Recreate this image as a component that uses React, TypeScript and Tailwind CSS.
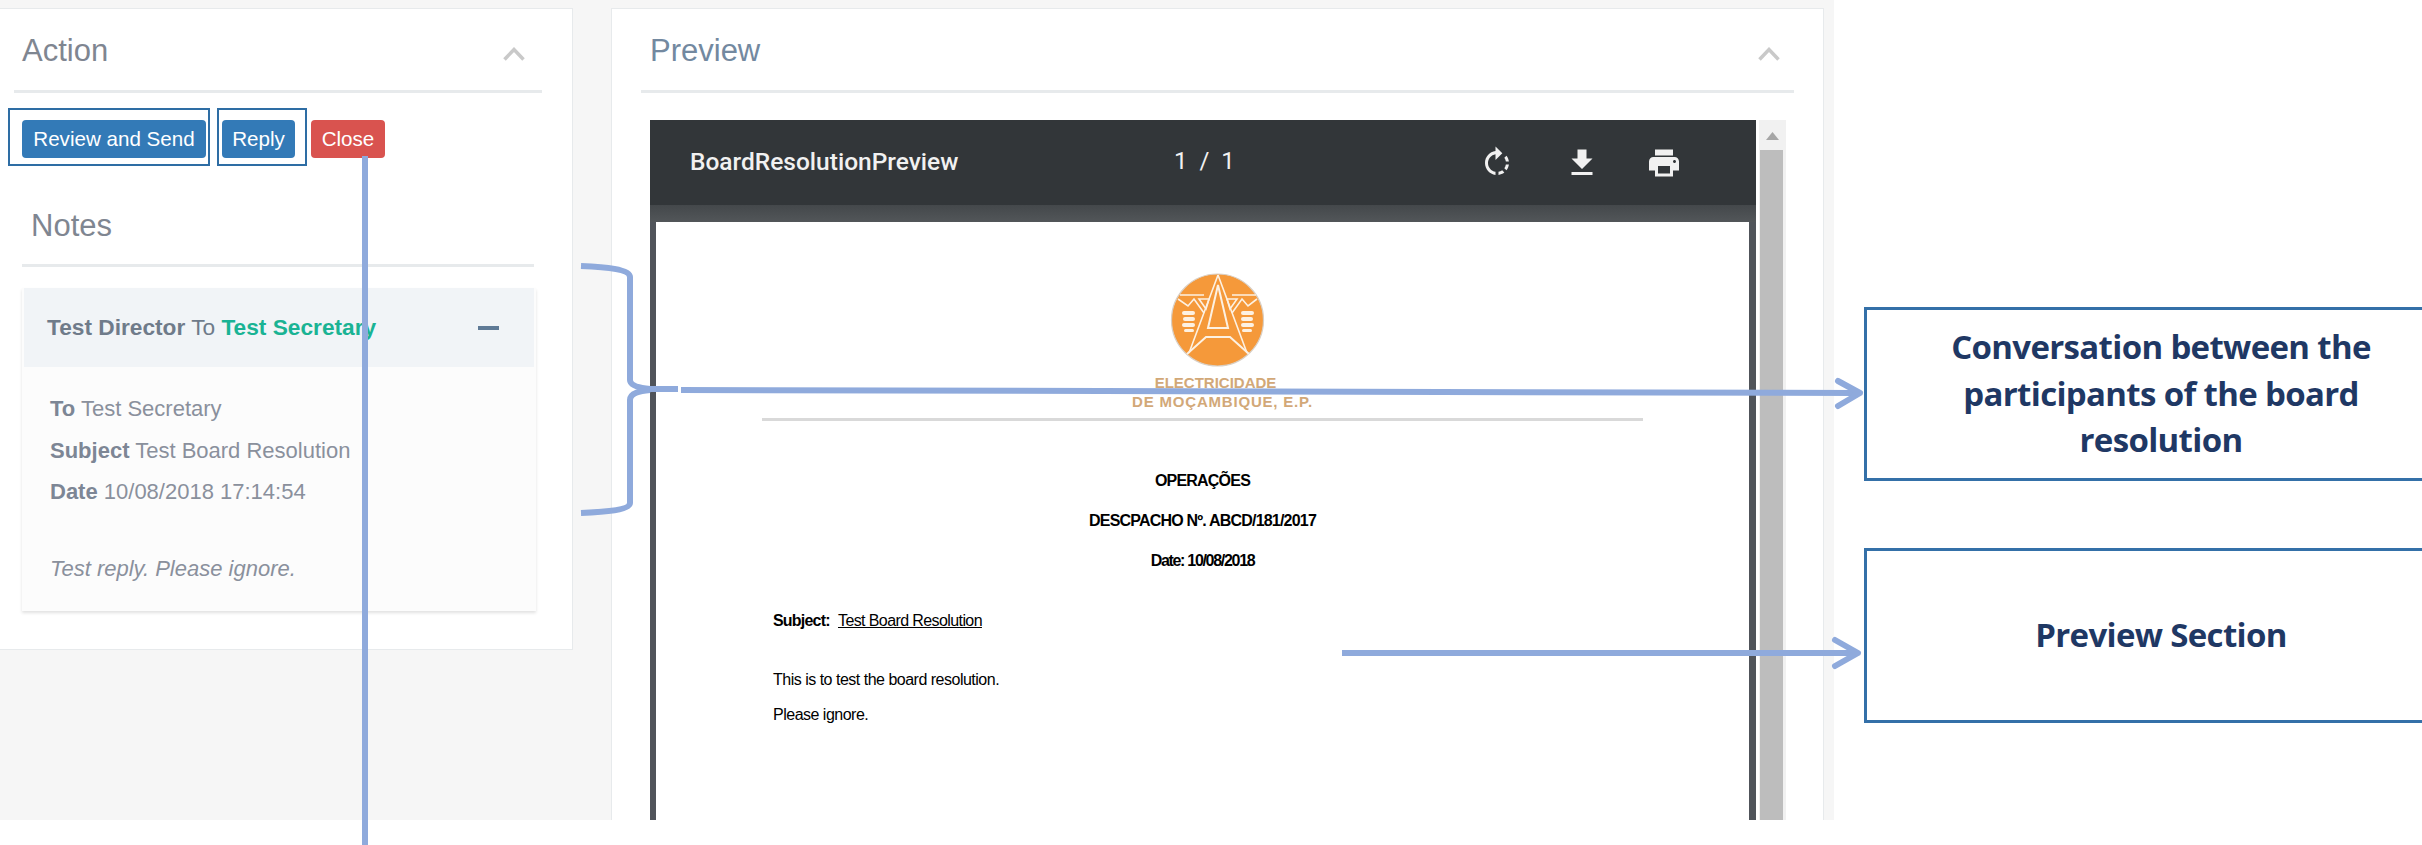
const chevron = (
  <svg className="mt-[4px]" width="22" height="14" viewBox="0 0 22 14" fill="none" stroke="#c9c9c9" strokeWidth="3.5">
    <path d="M1.5 12.5 L11 2.5 L20.5 12.5" />
  </svg>
);

function Logo() {
  return (
    <svg width="110" height="110" viewBox="0 0 110 110" fill="none" stroke="#fdf1e2" strokeWidth="1.6">
      <circle cx="56.5" cy="55" r="46" fill="#f5993a" stroke="#d9cfc4" strokeWidth="1.2" />
      <path d="M57 10 L28 88 M57 10 L86 88" />
      <path d="M19 30 H43 M71 30 H95" />
      <path d="M57 20 L47 63 H67 Z" strokeWidth="2" />
      <path d="M26 89 L45 72 H69 L88 89" strokeWidth="2" />
      <path d="M17 34 L27 41 L33 34 L43 48 M96 34 L87 41 L81 34 L71 48" />
      <path d="M38 34 H48 L45 44 Z M76 34 H66 L69 44 Z" />
      <g fill="#fdf1e2" stroke="none">
        <rect x="21" y="46" width="13" height="4" rx="2" />
        <rect x="22" y="52" width="12" height="4" rx="2" />
        <rect x="21" y="58" width="13" height="4" rx="2" />
        <rect x="23" y="64" width="10" height="3" rx="1.5" />
        <rect x="80" y="46" width="13" height="4" rx="2" />
        <rect x="80" y="52" width="12" height="4" rx="2" />
        <rect x="80" y="58" width="13" height="4" rx="2" />
        <rect x="81" y="64" width="10" height="3" rx="1.5" />
      </g>
    </svg>
  );
}

function PdfViewer() {
  return (
    <div className="flex mt-[27px] ml-[9px] h-[700px] overflow-hidden">
      <div className="w-[1106px] bg-[#50545a] flex flex-col">
        <div className="h-[85px] shrink-0 bg-[#323639] flex items-center text-[#f1f1f1]">
          <span className="ml-[40px] w-[484px] text-[24.5px] font-medium [font-family:Roboto,sans-serif]">
            BoardResolutionPreview
          </span>
          <span className="w-[60px] pb-[4px] text-[24px] tracking-[1.5px] [word-spacing:3px] [font-family:Roboto,sans-serif] whitespace-pre">1 / 1</span>
          <svg className="ml-[245px]" width="36" height="36" viewBox="0 0 24 24" fill="#f1f1f1">
            <path d="M15.55 5.55L11 1v3.07C7.06 4.56 4 7.92 4 12s3.05 7.44 7 7.93v-2.02c-2.84-.48-5-2.94-5-5.91s2.16-5.43 5-5.91V10l4.55-4.45zM19.93 11c-.17-1.39-.72-2.73-1.62-3.89l-1.42 1.42c.54.75.88 1.6 1.02 2.47h2.02zM13 17.9v2.02c1.39-.17 2.74-.71 3.9-1.61l-1.44-1.44c-.75.54-1.59.89-2.46 1.03zm3.89-2.42l1.42 1.41c.9-1.16 1.45-2.5 1.62-3.89h-2.02c-.14.87-.48 1.72-1.02 2.48z" />
          </svg>
          <svg className="ml-[49px]" width="36" height="36" viewBox="0 0 24 24" fill="#f1f1f1">
            <path d="M19 9h-4V3H9v6H5l7 7 7-7zM5 18v2h14v-2H5z" />
          </svg>
          <svg className="ml-[46px]" width="36" height="36" viewBox="0 0 24 24" fill="#f1f1f1">
            <path d="M19 8H5c-1.66 0-3 1.34-3 3v6h4v4h12v-4h4v-6c0-1.66-1.34-3-3-3zm-3 11H8v-5h8v5zm3-7c-.55 0-1-.45-1-1s.45-1 1-1 1 .45 1 1-.45 1-1 1zm-1-9H6v4h12V3z" />
          </svg>
        </div>
        <div className="h-[17px] shrink-0 bg-gradient-to-b from-[#44484b] to-[#525659]" />
        <div className="ml-[6px] mr-[7px] flex-1 bg-white flex flex-col items-center text-black [font-family:'Liberation_Sans',sans-serif]">
          <div className="pt-[43px] ml-[26px] flex flex-col items-center font-bold text-[15px] leading-[19px] text-[#d2a878]">
            <Logo />
            <span className="-mt-[2px]">ELECTRICIDADE</span>
            <span className="pl-[14px] tracking-[0.8px] whitespace-nowrap">DE MOÇAMBIQUE, E.P.</span>
          </div>
          <div className="mt-[7px] w-[881px] h-[3px] bg-[#d9d9d9]" />
          <div className="mt-[40px] text-[16px] leading-[40px] font-bold text-center tracking-[-0.8px]">OPERAÇÕES</div>
          <div className="text-[16px] leading-[40px] font-bold text-center tracking-[-0.8px]">DESCPACHO Nº. ABCD/181/2017</div>
          <div className="text-[16px] leading-[40px] font-bold text-center tracking-[-1.3px]">Date: 10/08/2018</div>
          <div className="self-start ml-[117px] mt-[20px] flex text-[16px] leading-[40px]">
            <span className="font-bold tracking-[-0.8px] w-[65px]">Subject:</span>
            <span className="underline tracking-[-0.6px]">Test Board Resolution</span>
          </div>
          <div className="self-start ml-[117px] mt-[21px] text-[16px] leading-[35px] tracking-[-0.5px]">
            This is to test the board resolution.
            <br />
            Please ignore.
          </div>
        </div>
      </div>
      <div className="ml-[3px] w-[27px] bg-[#f1f1f1] flex flex-col">
        <div className="h-[30px] flex justify-center pt-[12px]">
          <svg width="13" height="8" viewBox="0 0 13 8" fill="#a6a6a6">
            <path d="M6.5 0 L13 8 H0 Z" />
          </svg>
        </div>
        <div className="ml-[1px] w-[23px] flex-1 bg-[#bdbdbd]" />
      </div>
    </div>
  );
}

function ActionPanel() {
  return (
    <div className="w-[573px] h-[642px] shrink-0 bg-white border-r border-b border-t border-[#e7eaec]">
      <div className="ml-[14px] mr-[30px] h-[84px] pt-[4px] border-b-[3px] border-[#e7eaec] flex items-center justify-between pl-[8px] pr-[17px] text-[31px] text-[#7f8691]">
        <span>Action</span>
        {chevron}
      </div>
      <div className="ml-[8px] mt-[15px] flex text-white text-[20.6px]">
        <div className="w-[202px] h-[58px] border-2 border-[#2e6da4] pl-[12px] pt-[10px]">
          <div className="w-[184px] h-[38px] rounded-[4px] bg-[#337ab7] flex items-center justify-center">Review and Send</div>
        </div>
        <div className="ml-[7px] w-[90px] h-[58px] border-2 border-[#2e6da4] pl-[3px] pt-[10px]">
          <div className="w-[73px] h-[38px] rounded-[4px] bg-[#337ab7] flex items-center justify-center">Reply</div>
        </div>
        <div className="ml-[4px] mt-[12px] w-[74px] h-[38px] rounded-[4px] bg-[#d9534f] flex items-center justify-center">Close</div>
      </div>
      <div className="ml-[22px] w-[514px] mt-[41px]">
        <div className="w-[512px] pl-[9px] pb-[20px] border-b-[3px] border-[#e7eaec] text-[31px] leading-[37px] text-[#7f8691]">Notes</div>
        <div className="mt-[21px] bg-[#fcfcfc] shadow-[0_2px_3px_rgba(0,0,0,0.12)]">
          <div className="mx-[2px] h-[79px] bg-[#f1f4f7] flex items-center justify-between pl-[23px] pr-[35px] text-[22.7px] text-[#6f7b8a]">
            <span>
              <b>Test Director</b> To <b className="text-[#1ab394]">Test Secretary</b>
            </span>
            <span className="w-[21px] h-[4px] bg-[#5f7a96]" />
          </div>
          <div className="pl-[28px] pt-[21px] pb-[22px] text-[22px] leading-[41.5px] text-[#8a909c]">
            <div>
              <b className="text-[#7d8695]">To</b> Test Secretary
            </div>
            <div>
              <b className="text-[#7d8695]">Subject</b> Test Board Resolution
            </div>
            <div>
              <b className="text-[#7d8695]">Date</b> 10/08/2018 17:14:54
            </div>
            <div className="mt-[35px] italic">Test reply. Please ignore.</div>
          </div>
        </div>
      </div>
    </div>
  );
}

function PreviewPanel() {
  return (
    <div className="ml-[38px] w-[1213px] shrink-0 bg-white border-x border-t border-[#e7eaec] pl-[29px]">
      <div className="w-[1153px] h-[84px] pt-[4px] border-b-[3px] border-[#e7eaec] flex items-center justify-between pl-[9px] pr-[14px] text-[31px] text-[#7389a0]">
        <span>Preview</span>
        {chevron}
      </div>
      <PdfViewer />
    </div>
  );
}

function Callouts() {
  return (
    <div className="ml-[30px] pt-[307px] w-[600px] shrink-0 flex flex-col gap-[67px] text-[#1f3864] text-[33px] font-bold text-center leading-[46.5px] [font-family:'Open_Sans',sans-serif]">
      <div className="h-[174px] border-[3px] border-[#3470a8] flex items-center justify-center tracking-[-0.66px]">
        <div className="w-[588px] pr-[6px]">
          Conversation between the
          <br />
          participants of the board
          <br />
          resolution
        </div>
      </div>
      <div className="h-[175px] border-[3px] border-[#3470a8] flex items-center justify-center tracking-[-0.66px]">
        <div className="w-[588px] pr-[6px]">Preview Section</div>
      </div>
    </div>
  );
}

export default function App() {
  return (
    <div className="relative w-[2422px] h-[845px] bg-white overflow-hidden [font-family:'Liberation_Sans',sans-serif]">
      <div className="flex">
        <div className="w-[1834px] h-[820px] shrink-0 bg-[#f6f6f6] pt-[8px] flex overflow-hidden">
          <ActionPanel />
          <PreviewPanel />
        </div>
        <Callouts />
      </div>
      {/* annotation arrows drawn over the screenshot */}
      <svg className="absolute left-0 top-0 pointer-events-none" width="2422" height="845" fill="none" stroke="#8faadc" strokeWidth="6">
        <path d="M365 156 V845" />
        <path d="M581 266 C605 267 630 269 630 277 V380 C630 386 640 388 650 389 H678" />
        <path d="M581 513 C605 512 630 510 630 503 V400 C630 393 640 391 650 390" />
        <path d="M681 390 L1858 393" />
        <path d="M1838 381 L1860 393 L1838 406" strokeLinecap="round" strokeLinejoin="round" />
        <path d="M1342 653 H1858" />
        <path d="M1835 640 L1858 653 L1835 666" strokeLinecap="round" strokeLinejoin="round" />
      </svg>
    </div>
  );
}
